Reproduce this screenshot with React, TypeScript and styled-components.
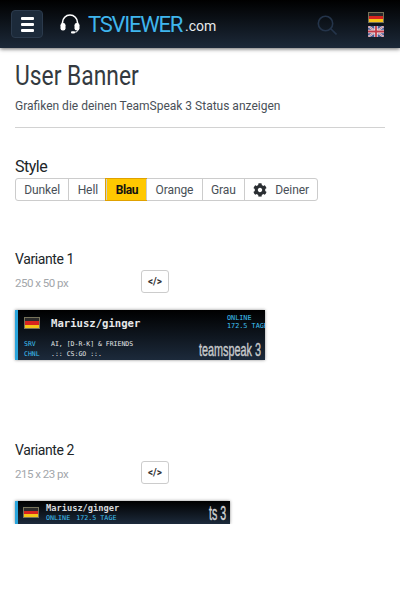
import React from "react";
import styled, { createGlobalStyle } from "styled-components";
import { FaCog } from "react-icons/fa";

const GlobalStyle = createGlobalStyle`
  * { box-sizing: border-box; }
  html, body { margin: 0; background: #fff; overflow: hidden; }
  body { font-family: Roboto, "Liberation Sans", sans-serif; color: #212529; }
`;

const styles = [
  { name: "Dunkel" },
  { name: "Hell" },
  { name: "Blau", active: true },
  { name: "Orange" },
  { name: "Grau" },
];

function GermanFlag() {
  return (
    <FlagBox>
      <FlagStripe $color="#2a2a2a" />
      <FlagStripe $color="#d8241f" />
      <FlagStripe $color="#f5c518" />
    </FlagBox>
  );
}

function UkFlag() {
  return (
    <svg width="16" height="11" viewBox="0 0 16 11">
      <rect width="16" height="11" fill="#4a5a92" />
      <path d="M0 0L16 11M16 0L0 11" stroke="#e4e0e8" strokeWidth="2" />
      <path d="M0 0L16 11M16 0L0 11" stroke="#b8505f" strokeWidth="0.7" />
      <path d="M8 0V11M0 5.5H16" stroke="#e8e4ea" strokeWidth="3.4" />
      <path d="M8 0V11M0 5.5H16" stroke="#c23a48" strokeWidth="1.8" />
    </svg>
  );
}

function Headset() {
  return (
    <svg width="20" height="20" viewBox="0 0 20 20">
      <path d="M2.5 10V8.5a7.5 7.5 0 0 1 15 0V10" fill="none" stroke="#fff" strokeWidth="1.6" />
      <rect x="0.5" y="9" width="5" height="7.5" rx="2.2" fill="#fff" />
      <rect x="14.5" y="9" width="5" height="7.5" rx="2.2" fill="#fff" />
      <path d="M18 16q0 2.2-4 2.4" fill="none" stroke="#fff" strokeWidth="1" />
      <rect x="11" y="17.2" width="4" height="2.4" rx="1" fill="#fff" />
    </svg>
  );
}

export default function App() {
  return (
    <>
      <GlobalStyle />
      <Header>
        <MenuButton aria-label="Menu">
          <MenuBar />
          <MenuBar />
          <MenuBar />
        </MenuButton>
        <Logo>
          <Headset />
          <LogoName>TSVIEWER</LogoName>
          <LogoTld>.com</LogoTld>
        </Logo>
        <SearchIcon width="20" height="20" viewBox="0 0 20 20">
          <circle cx="8.5" cy="8.5" r="7.2" fill="none" stroke="#24344a" strokeWidth="1.6" />
          <path d="M13.8 13.8L19.5 19.5" stroke="#24344a" strokeWidth="1.6" />
        </SearchIcon>
        <FlagStack>
          <GermanFlag />
          <UkFlag />
        </FlagStack>
      </Header>

      <Main>
        <Title>User Banner</Title>
        <Lead>Grafiken die deinen TeamSpeak 3 Status anzeigen</Lead>
        <Rule />

        <StyleHeading>Style</StyleHeading>
        <StyleGroup>
          {styles.map((s) => (
            <StyleButton key={s.name} $active={s.active}>
              {s.name}
            </StyleButton>
          ))}
          <StyleButton>
            <FaCog size={14} color="#2b2f33" />
            <CustomLabel>Deiner</CustomLabel>
          </StyleButton>
        </StyleGroup>

        <Variant $top={50}>
          <VariantName>Variante 1</VariantName>
          <SizeRow>
            <SizeText>250 x 50 px</SizeText>
            <CodeButton>&lt;/&gt;</CodeButton>
          </SizeRow>
          <LargeBanner>
            <BannerTop>
              <BannerFlag>
                <GermanFlag />
              </BannerFlag>
              <BannerNick>Mariusz/ginger</BannerNick>
              <StatusLines>
                <span>ONLINE</span>
                <span>172.5 TAGE</span>
              </StatusLines>
            </BannerTop>
            <BannerBottom>
              <InfoGrid>
                <InfoKey>SRV</InfoKey>
                <InfoValue>AI, [D-R-K] &amp; FRIENDS</InfoValue>
                <InfoKey>CHNL</InfoKey>
                <InfoValue>.:: CS:GO ::.</InfoValue>
              </InfoGrid>
              <BrandMark>teamspeak 3</BrandMark>
            </BannerBottom>
          </LargeBanner>
        </Variant>

        <Variant $top={82}>
          <VariantName>Variante 2</VariantName>
          <SizeRow>
            <SizeText>215 x 23 px</SizeText>
            <CodeButton>&lt;/&gt;</CodeButton>
          </SizeRow>
          <SmallBanner>
            <GermanFlag />
            <SmallText>
              <SmallNick>Mariusz/ginger</SmallNick>
              <SmallStatus>
                <span>ONLINE</span>
                <span>172.5 TAGE</span>
              </SmallStatus>
            </SmallText>
            <SmallMark>ts 3</SmallMark>
          </SmallBanner>
        </Variant>
      </Main>
    </>
  );
}

const Header = styled.header`
  display: flex;
  align-items: center;
  height: 48px;
  padding: 0 16px 0 11px;
  background: linear-gradient(to bottom, #000 0%, #1c2939 100%);
  box-shadow: 0 1px 4px rgba(0, 0, 0, 0.6);
`;

const MenuButton = styled.button`
  display: flex;
  flex-direction: column;
  justify-content: center;
  align-items: center;
  gap: 3px;
  width: 32px;
  height: 28px;
  padding: 0;
  background: #1c2a3a;
  border: 1px solid #2b3a4c;
  border-radius: 4px;
`;

const MenuBar = styled.span`
  display: block;
  width: 13px;
  height: 3px;
  background: #fff;
  border-radius: 1px;
`;

const Logo = styled.div`
  display: flex;
  align-items: center;
  margin-left: 17px;
`;

const LogoName = styled.span`
  margin-left: 8px;
  font-size: 22px;
  letter-spacing: -1.25px;
  color: #3fb6ee;
`;

const LogoTld = styled.span`
  margin: 4px 0 0 3px;
  font-size: 14px;
  color: #e8eaec;
`;

const SearchIcon = styled.svg`
  margin: 1px 0 0 auto;
`;

const FlagStack = styled.div`
  display: flex;
  flex-direction: column;
  gap: 3px;
  margin-left: 31px;
`;

const FlagBox = styled.div`
  display: flex;
  flex-direction: column;
  flex: none;
  width: 16px;
  height: 11px;
  border: 1px solid #77735a;
`;

const FlagStripe = styled.div<{ $color: string }>`
  flex: 1;
  background: ${(p) => p.$color};
`;

const BannerFlag = styled.div`
  flex: none;
  & > div {
    height: 12px;
  }
`;

const Main = styled.main`
  padding: 12px 15px 0;
`;

const Title = styled.h1`
  margin: 0;
  font-size: 28px;
  font-weight: 400;
  line-height: 31px;
  color: #343a40;
  transform: scaleX(0.815);
  transform-origin: left;
  white-space: nowrap;
`;

const Lead = styled.p`
  margin: 6px 0 0;
  font-size: 12px;
  line-height: 18px;
  color: #495057;
`;

const Rule = styled.hr`
  margin: 12px 0 0;
  border: 0;
  border-top: 1px solid #d2d2d2;
`;

const StyleHeading = styled.h2`
  margin: 29px 0 0;
  font-size: 16px;
  font-weight: 400;
  line-height: 19px;
  letter-spacing: -0.5px;
  color: #212529;
`;

const StyleGroup = styled.div`
  display: flex;
  width: fit-content;
  margin-top: 2px;
  background: #fff;
  border: 1px solid #ccc;
  border-radius: 3px;
`;

const StyleButton = styled.div<{ $active?: boolean }>`
  display: flex;
  align-items: center;
  height: 21px;
  padding: 0 8.3px;
  font-size: 12px;
  letter-spacing: ${(p) => (p.$active ? "-0.4px" : "-0.1px")};
  font-weight: ${(p) => (p.$active ? 700 : 400)};
  color: ${(p) => (p.$active ? "#111" : "#495057")};
  background: ${(p) => (p.$active ? "#ffc800" : "transparent")};
  box-shadow: ${(p) => (p.$active ? "0 0 0 1px #e0a100" : "none")};
  & + & {
    border-left: 1px solid #ccc;
  }
`;

const CustomLabel = styled.span`
  margin-left: 8px;
`;

const Variant = styled.section<{ $top: number }>`
  margin-top: ${(p) => p.$top}px;
`;

const VariantName = styled.h3`
  margin: 0;
  font-size: 14px;
  font-weight: 400;
  line-height: 17px;
  letter-spacing: -0.4px;
  color: #212529;
`;

const SizeRow = styled.div`
  display: flex;
  align-items: center;
  margin-top: 2px;
`;

const SizeText = styled.span`
  width: 126px;
  padding-top: 3px;
  font-size: 11.5px;
  letter-spacing: -0.5px;
  color: #a2a6aa;
`;

const CodeButton = styled.div`
  display: flex;
  align-items: center;
  justify-content: center;
  width: 28px;
  height: 23px;
  font-size: 10px;
  font-weight: 700;
  color: #333;
  border: 1px solid #ccc;
  border-radius: 3px;
`;

const BannerBase = styled.div`
  overflow: hidden;
  margin-top: 17px;
  background: linear-gradient(to bottom, #000 0%, #1c2a3b 100%);
  border-left: 3px solid #2aa5dc;
  box-shadow: 0 0 3px rgba(0, 0, 0, 0.45);
  font-family: "DejaVu Sans Mono", monospace;
`;

const LargeBanner = styled(BannerBase)`
  display: flex;
  flex-direction: column;
  justify-content: space-between;
  width: 250px;
  height: 50px;
  padding: 7px 0 1px 6px;
`;

const BannerTop = styled.div`
  display: flex;
  align-items: flex-start;
`;

const BannerNick = styled.span`
  margin-left: 11px;
  font-size: 10.6px;
  font-weight: 700;
  line-height: 12px;
  color: #e6e8ea;
`;

const StatusLines = styled.div`
  display: flex;
  flex: none;
  flex-direction: column;
  margin: -2px 0 0 auto;
  width: 38px;
  white-space: nowrap;
  font-size: 6.8px;
  line-height: 7.5px;
  color: #3fc1f5;
`;

const BannerBottom = styled.div`
  display: flex;
  align-items: flex-end;
  justify-content: space-between;
  padding-right: 4px;
`;

const InfoGrid = styled.div`
  display: grid;
  grid-template-columns: 27px auto;
  font-size: 6.5px;
  line-height: 10px;
`;

const InfoKey = styled.span`
  color: #3fc1f5;
`;

const InfoValue = styled.span`
  color: #e6e8ea;
`;

const BrandMark = styled.span`
  flex: none;
  width: 62px;
  font-family: "Liberation Sans", sans-serif;
  font-size: 19px;
  line-height: 19px;
  color: #c8cacc;
  -webkit-text-stroke: 0.4px #c8cacc;
  transform: scaleX(0.57);
  transform-origin: left;
  white-space: nowrap;
`;

const SmallBanner = styled(BannerBase)`
  display: flex;
  align-items: center;
  width: 215px;
  height: 23px;
  padding: 0 4px 0 5px;
`;

const SmallText = styled.div`
  display: flex;
  flex-direction: column;
  margin-left: 7px;
`;

const SmallNick = styled.span`
  font-size: 8.7px;
  font-weight: 700;
  line-height: 11px;
  color: #d8dadc;
`;

const SmallStatus = styled.span`
  display: flex;
  gap: 6px;
  font-size: 6.7px;
  line-height: 8px;
  color: #3fc1f5;
`;

const SmallMark = styled.span`
  flex: none;
  width: 17px;
  margin-left: auto;
  font-family: "Liberation Sans", sans-serif;
  font-size: 20px;
  line-height: 20px;
  color: #d0d2d4;
  -webkit-text-stroke: 0.4px #d0d2d4;
  transform: scaleX(0.53);
  transform-origin: left;
  white-space: nowrap;
`;
